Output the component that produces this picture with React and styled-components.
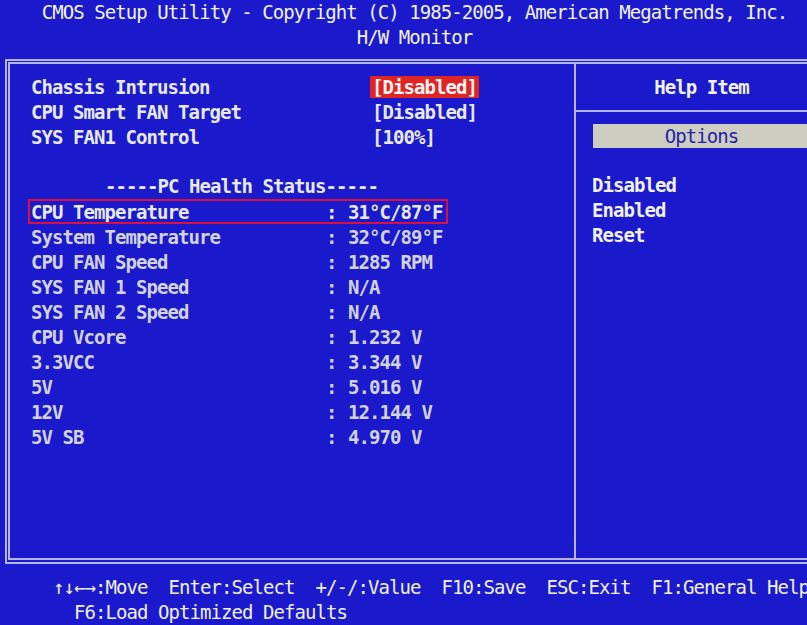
import React from 'react';
import styled, { createGlobalStyle } from 'styled-components';

const BLUE = '#1a1acc';
const LINE = '#b4b4f0';

const GlobalStyle = createGlobalStyle`
  html, body {
    margin: 0;
    padding: 0;
    background: ${BLUE};
  }
`;

const Screen = styled.div`
  width: 807px;
  height: 625px;
  overflow: hidden;
  background: ${BLUE};
  color: #e6e6ee;
  font-family: 'DejaVu Sans Mono', 'Liberation Mono', monospace;
  font-size: 19px;
  letter-spacing: -0.94px;
  white-space: pre;
`;

const Header = styled.div`
  height: 50px;
  padding-left: 22px;
  display: flex;
  flex-direction: column;
  align-items: center;
  margin-bottom: 9px;
`;

const HeaderLine = styled.div`
  height: 25px;
  line-height: 25px;
  color: #f2f2f6;
`;

const Frame = styled.div`
  margin-left: 5px;
  width: 827px;
  height: 505px;
  box-sizing: border-box;
  border: 2px solid ${LINE};
  padding: 1px 1px 2px 1px;
`;

const FrameInner = styled.div`
  height: 100%;
  box-sizing: border-box;
  border: 2px solid ${LINE};
  display: flex;
`;

const LeftPanel = styled.div`
  width: 564px;
  padding: 10px 0 0 18px;
  box-sizing: border-box;
  font-weight: bold;
`;

const Row = styled.div`
  height: 25px;
  display: grid;
  grid-template-columns: ${(p) => p.$columns};
  align-items: center;
  padding-left: 3px;
  width: ${(p) => (p.$wide ? '420px' : 'auto')};
  box-sizing: border-box;
  color: ${(p) => (p.$dim ? '#d2d2e0' : '#e8e8f0')};
  outline: ${(p) => (p.$outlined ? '2px solid #d8123e' : 'none')};
  outline-offset: -2px;
`;

const Value = styled.span`
  justify-self: start;
  height: 22px;
  line-height: 22px;
  margin-left: -2px;
  padding: 0 2px;
  background: ${(p) => (p.$selected ? '#e02424' : 'transparent')};
  color: ${(p) => (p.$selected ? '#fff4f4' : 'inherit')};
`;

const SectionTitle = styled.div`
  height: 25px;
  line-height: 25px;
  padding-left: 77px;
  color: #e8e8f0;
`;

const Spacer = styled.div`
  height: 25px;
`;

const RightPanel = styled.div`
  flex: 1;
  border-left: 2px solid ${LINE};
  display: flex;
  flex-direction: column;
  font-weight: bold;
`;

const HelpTitle = styled.div`
  height: 46px;
  line-height: 46px;
  text-align: center;
  border-bottom: 2px solid ${LINE};
  color: #f0f0f6;
`;

const OptionsBar = styled.div`
  margin: 12px 17px 0 17px;
  height: 24px;
  line-height: 24px;
  text-align: center;
  background: #cdcdc2;
  color: #2424a8;
  font-weight: normal;
`;

const OptionList = styled.div`
  margin-top: 25px;
  padding-left: 16px;
`;

const OptionItem = styled.div`
  height: 25px;
  line-height: 25px;
  color: #f0f0f6;
`;

const Footer = styled.div`
  padding: 11px 0 0 53px;
  color: #f0f0f6;
`;

const FooterLine = styled.div`
  height: 25px;
  line-height: 25px;
`;

const settings = [
  { label: 'Chassis Intrusion', value: '[Disabled]', selected: true },
  { label: 'CPU Smart FAN Target', value: '[Disabled]' },
  { label: 'SYS FAN1 Control', value: '[100%]' },
];

const health = [
  { label: 'CPU Temperature', value: '31°C/87°F', outlined: true },
  { label: 'System Temperature', value: '32°C/89°F' },
  { label: 'CPU FAN Speed', value: '1285 RPM' },
  { label: 'SYS FAN 1 Speed', value: 'N/A' },
  { label: 'SYS FAN 2 Speed', value: 'N/A' },
  { label: 'CPU Vcore', value: '1.232 V' },
  { label: '3.3VCC', value: '3.344 V' },
  { label: '5V', value: '5.016 V' },
  { label: '12V', value: '12.144 V' },
  { label: '5V SB', value: '4.970 V' },
];

const options = ['Disabled', 'Enabled', 'Reset'];

export default function App() {
  return (
    <Screen>
      <GlobalStyle />
      <Header>
        <HeaderLine>CMOS Setup Utility - Copyright (C) 1985-2005, American Megatrends, Inc.</HeaderLine>
        <HeaderLine>H/W Monitor</HeaderLine>
      </Header>
      <Frame>
        <FrameInner>
          <LeftPanel>
            {settings.map((s) => (
              <Row key={s.label} $columns="341px auto">
                <span>{s.label}</span>
                <Value $selected={s.selected}>{s.value}</Value>
              </Row>
            ))}
            <Spacer />
            <SectionTitle>-----PC Health Status-----</SectionTitle>
            {health.map((h) => (
              <Row key={h.label} $columns="295px 22px auto" $wide $dim={!h.outlined} $outlined={h.outlined}>
                <span>{h.label}</span>
                <span>:</span>
                <span>{h.value}</span>
              </Row>
            ))}
          </LeftPanel>
          <RightPanel>
            <HelpTitle>Help Item</HelpTitle>
            <OptionsBar>Options</OptionsBar>
            <OptionList>
              {options.map((o) => (
                <OptionItem key={o}>{o}</OptionItem>
              ))}
            </OptionList>
          </RightPanel>
        </FrameInner>
      </Frame>
      <Footer>
        <FooterLine>↑↓←→:Move  Enter:Select  +/-/:Value  F10:Save  ESC:Exit  F1:General Help</FooterLine>
        <FooterLine>  F6:Load Optimized Defaults</FooterLine>
      </Footer>
    </Screen>
  );
}
